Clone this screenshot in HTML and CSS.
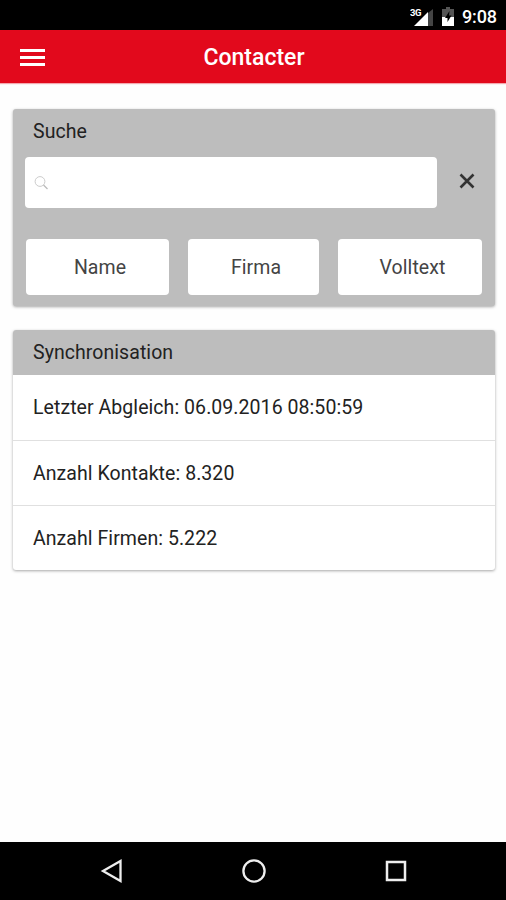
FILE: index.html
```html
<!DOCTYPE html>
<html lang="de">
<head>
    <meta charset="UTF-8">
    <meta name="viewport" content="width=device-width, initial-scale=1">
    <title>Contacter</title>
    <link rel="stylesheet" href="styles.css">
</head>
<body>
    <div class="status-bar">
        <svg class="signal" width="24" height="22" viewBox="0 0 24 22">
            <path d="M18 7L23 3V20H18Z" fill="#444"/>
            <path d="M4 20L18 6V20Z" fill="#fff"/>
            <text x="0" y="10" class="network">3G</text>
        </svg>
        <svg class="battery" width="12" height="19" viewBox="0 0 12 19">
            <path d="M4 0H8V2H12V10H0V2H4Z" fill="#555"/>
            <path d="M0 10H12V19H0Z" fill="#fff"/>
            <path d="M7.500 4L3 11H5.500V15L9.500 8.500H7Z" fill="#000"/>
        </svg>
        <span class="clock">9:08</span>
    </div>

    <header class="app-bar">
        <button class="menu-btn" aria-label="Menü">
            <span></span>
            <span></span>
            <span></span>
        </button>
        <h1>Contacter</h1>
    </header>

    <main class="content">
        <section class="card search-card">
            <h2>Suche</h2>
            <div class="search-row">
                <label class="search-field">
                    <svg width="15" height="14" viewBox="0 0 15 14">
                        <circle cx="6" cy="5.500" r="4.900" fill="none" stroke="#ccc" stroke-width="1"/>
                        <path d="M9.500 9L13.500 13" stroke="#bbb" stroke-width="1.300"/>
                    </svg>
                    <input type="text" aria-label="Suche">
                </label>
                <button class="clear-btn" aria-label="Löschen">
                    <svg width="16" height="16" viewBox="0 0 16 16">
                        <path d="M1.500 1.500L14.500 14.500M14.500 1.500L1.500 14.500" stroke="#333" stroke-width="2.600"/>
                    </svg>
                </button>
            </div>
            <div class="button-row">
                <button>Name</button>
                <button>Firma</button>
                <button>Volltext</button>
            </div>
        </section>

        <section class="card sync-card">
            <h2>Synchronisation</h2>
            <ul>
                <li>Letzter Abgleich: 06.09.2016 08:50:59</li>
                <li>Anzahl Kontakte: 8.320</li>
                <li>Anzahl Firmen: 5.222</li>
            </ul>
        </section>
    </main>

    <nav class="nav-bar">
        <svg width="24" height="26" viewBox="0 0 24 26">
            <path d="M3 13L20.500 3V23Z" fill="none" stroke="#eee" stroke-width="2.300"/>
        </svg>
        <svg width="26" height="26" viewBox="0 0 26 26">
            <circle cx="13" cy="13" r="10.600" fill="none" stroke="#eee" stroke-width="2.300"/>
        </svg>
        <svg width="24" height="26" viewBox="0 0 24 26">
            <rect x="3" y="4" width="18" height="18" fill="none" stroke="#eee" stroke-width="2.500"/>
        </svg>
    </nav>
</body>
</html>
```
FILE: styles.css
```css
* {
    box-sizing: border-box;
}

body {
    display: flex;
    flex-direction: column;
    height: 100vh;
    margin: 0;
    font-family: Roboto, "Liberation Sans", sans-serif;
    font-size: 19.5px;
    letter-spacing: 0.06px;
    color: #222;
    background-color: #fefefe;
}

h1, h2, ul {
    margin: 0;
    padding: 0;
    font-weight: 400;
}

button {
    padding: 0;
    border: none;
    background: none;
    font: inherit;
    letter-spacing: inherit;
    color: inherit;
}

svg {
    display: block;
}

.status-bar {
    display: flex;
    justify-content: flex-end;
    align-items: center;
    height: 30px;
    padding: 2px 9px 0 0;
    background-color: #000;
    color: #fff;
}

.signal {
    margin: 1px 8px 0 0;
}

.network {
    font-size: 9.5px;
    font-weight: 700;
    letter-spacing: -0.4px;
    fill: #fff;
}

.battery {
    margin-right: 8px;
}

.clock {
    font-size: 18px;
    font-weight: 500;
    letter-spacing: -0.1px;
}

.app-bar {
    display: grid;
    grid-template-columns: 46px 1fr 44px;
    align-items: center;
    height: 53px;
    background-color: #e2091c;
    box-shadow: 0 1px 1px rgba(226, 9, 28, 0.35);
    color: #fff;
}

.app-bar h1 {
    padding-top: 1px;
    font-size: 23px;
    font-weight: 500;
    letter-spacing: 0;
    text-align: center;
}

.menu-btn {
    display: flex;
    flex-direction: column;
    gap: 4px;
    padding: 2px 0 0 20px;
}

.menu-btn span {
    width: 25px;
    height: 3px;
    background-color: #fff;
}

.content {
    flex: 1;
    padding: 26px 11px 0 13px;
}

.card {
    border-radius: 3px;
    box-shadow: 0 1px 3px rgba(0, 0, 0, 0.35);
}

.card h2 {
    height: 45px;
    padding-left: 20px;
    font-size: 19.5px;
    line-height: 46px;
}

.search-card {
    height: 197px;
    margin-bottom: 24px;
    padding: 0 13px 0 12px;
    background-color: #bdbdbd;
}

.search-card h2 {
    height: 48px;
    padding-left: 8px;
}

.search-row {
    display: flex;
}

.search-field {
    display: flex;
    align-items: center;
    width: 412px;
    height: 51px;
    padding: 0 9px;
    border-radius: 4px;
    background-color: #fff;
}

.search-field input {
    flex: 1;
    border: none;
    outline: none;
    font: inherit;
    background: none;
}

.clear-btn {
    display: flex;
    flex: 1;
    justify-content: center;
    align-items: center;
    padding: 0 0 3px 14px;
}

.button-row {
    display: grid;
    grid-template-columns: 143px 131px 144px;
    gap: 19px;
    margin: 31px 0 0 1px;
}

.button-row button {
    height: 56px;
    padding-left: 5px;
    border-radius: 4px;
    background-color: #fff;
    color: #444;
}

.sync-card {
    overflow: hidden;
    background-color: #fff;
}

.sync-card h2 {
    background-color: #bdbdbd;
}

.sync-card ul {
    list-style: none;
}

.sync-card li {
    height: 65px;
    padding-left: 20px;
    line-height: 65px;
}

.sync-card li + li {
    border-top: 1px solid #e0e0e0;
}

.nav-bar {
    display: flex;
    justify-content: space-between;
    align-items: center;
    height: 58px;
    padding: 0 98px 0 100px;
    background-color: #000;
}
```
